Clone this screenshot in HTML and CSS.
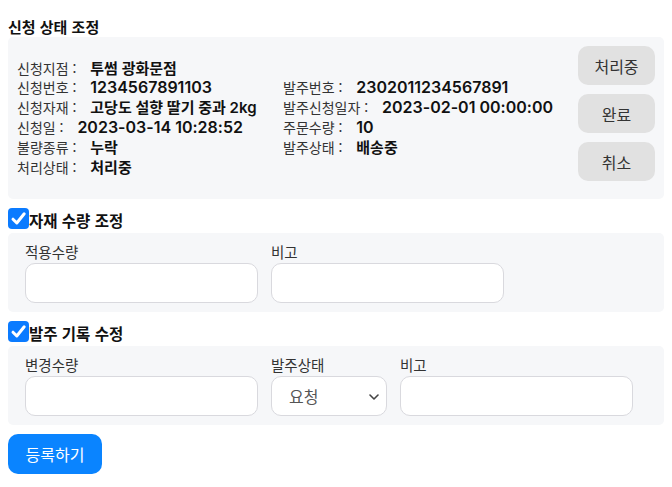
FILE: index.html
```html
<!DOCTYPE html>
<html lang="ko">
<head>
<meta charset="utf-8">
<title>신청 상태 조정</title>
<link rel="stylesheet" href="styles.css">
</head>
<body>
<h3 class="title">신청 상태 조정</h3>
<div class="panel info">
  <div class="col col1">
    <div class="row"><span class="k">신청지점 :</span> <b class="v">투썸 광화문점</b></div>
    <div class="row"><span class="k">신청번호 :</span> <b class="v num">1234567891103</b></div>
    <div class="row"><span class="k">신청자재 :</span> <b class="v">고당도 설향 딸기 중과 2kg</b></div>
    <div class="row"><span class="k">신청일 :</span> <b class="v num">2023-03-14 10:28:52</b></div>
    <div class="row"><span class="k">불량종류 :</span> <b class="v">누락</b></div>
    <div class="row"><span class="k">처리상태 :</span> <b class="v">처리중</b></div>
  </div>
  <div class="col col2">
    <div class="row"><span class="k">발주번호 :</span> <b class="v num">2302011234567891</b></div>
    <div class="row"><span class="k">발주신청일자 :</span> <b class="v num">2023-02-01 00:00:00</b></div>
    <div class="row"><span class="k">주문수량 :</span> <b class="v num">10</b></div>
    <div class="row"><span class="k">발주상태 :</span> <b class="v">배송중</b></div>
  </div>
  <div class="actions">
    <button class="btn-gray">처리중</button>
    <button class="btn-gray">완료</button>
    <button class="btn-gray">취소</button>
  </div>
</div>

<label class="check-row">
  <span class="cb"><svg viewBox="0 0 21 21" width="21" height="21"><rect x="0" y="0" width="21" height="21" rx="4" fill="#0b7bff"/><path d="M5 11.2 L8.8 15 L16.2 5.8" fill="none" stroke="#fff" stroke-width="3" stroke-linecap="round" stroke-linejoin="round"/></svg></span>
  <span class="check-label">자재 수량 조정</span>
</label>
<div class="panel fields">
  <div class="field">
    <span class="flabel">적용수량</span>
    <input class="inp" type="text">
  </div>
  <div class="field">
    <span class="flabel">비고</span>
    <input class="inp" type="text">
  </div>
</div>

<label class="check-row">
  <span class="cb"><svg viewBox="0 0 21 21" width="21" height="21"><rect x="0" y="0" width="21" height="21" rx="4" fill="#0b7bff"/><path d="M5 11.2 L8.8 15 L16.2 5.8" fill="none" stroke="#fff" stroke-width="3" stroke-linecap="round" stroke-linejoin="round"/></svg></span>
  <span class="check-label">발주 기록 수정</span>
</label>
<div class="panel fields">
  <div class="field">
    <span class="flabel">변경수량</span>
    <input class="inp" type="text">
  </div>
  <div class="field">
    <span class="flabel">발주상태</span>
    <div class="sel-wrap">
      <select class="sel"><option>요청</option></select>
      <svg class="chev" viewBox="0 0 10 6" width="10" height="6"><path d="M1 1 L5 5 L9 1" fill="none" stroke="#444" stroke-width="1.6" stroke-linecap="round" stroke-linejoin="round"/></svg>
    </div>
  </div>
  <div class="field">
    <span class="flabel">비고</span>
    <input class="inp" type="text">
  </div>
</div>

<button class="btn-primary">등록하기</button>
</body>
</html>
```

FILE: styles.css
```css
* { box-sizing: border-box; }
body {
  margin: 8px;
  font-family: "Noto Sans CJK KR", "Noto Sans", sans-serif;
  color: #111;
  background: #fff;
}
.title {
  margin: 9px 0 0 0;
  font-size: 15px;
  font-weight: 700;
  line-height: 20px;
  color: #111;
}
.panel {
  background: #f6f7f9;
  border-radius: 5px;
}
.info {
  display: flex;
  align-items: center;
  padding: 9px;
}
.col { font-size: 14px; line-height: 19.8px; }
.col1 { width: 266px; flex: none; }
.col2 { flex: 1; }
.row { white-space: nowrap; }
.k { color: #333; font-weight: 400; }
.v {
  font-family: "Inter", "Noto Sans CJK KR", sans-serif;
  font-size: 15px;
  color: #111;
  font-weight: 600;
  margin-left: 10px;
}
.num { font-size: 16px; font-weight: 600; }
.actions {
  display: flex;
  flex-direction: column;
  align-self: flex-start;
}
.btn-gray {
  width: 77px;
  height: 39px;
  margin-bottom: 9px;
  border: none;
  border-radius: 10px;
  background: #e1e1e1;
  color: #333;
  font-family: inherit;
  font-size: 16px;
  padding: 0;
}
.check-row {
  display: flex;
  align-items: center;
  margin: 8px 0 4px 0;
  height: 22px;
}
.cb { width: 21px; height: 21px; display: block; flex: none; }
.cb svg { display: block; }
.check-label {
  font-size: 15.5px;
  font-weight: 700;
  line-height: 22px;
  padding-top: 3px;
}
.fields {
  display: flex;
  gap: 13px;
  padding: 9px 9px 9px 17px;
}
.field {
  display: flex;
  flex-direction: column;
}
.flabel {
  font-size: 14.5px;
  line-height: 20px;
  color: #333;
  margin-bottom: 1px;
}
.inp {
  width: 233px;
  height: 40px;
  border: 1px solid #d9d9de;
  border-radius: 10px;
  background: #fff;
  font-family: inherit;
  font-size: 15px;
  padding: 0 12px;
}
.sel-wrap { position: relative; width: 116px; height: 40px; }
.sel {
  appearance: none;
  -webkit-appearance: none;
  width: 116px;
  height: 40px;
  border: 1px solid #d9d9de;
  border-radius: 10px;
  background: #fff;
  font-family: inherit;
  font-size: 16px;
  color: #555;
  padding: 0 0 0 17px;
}
.chev {
  position: absolute;
  right: 8px;
  top: 18px;
}
.btn-primary {
  margin-top: 9px;
  width: 94px;
  height: 40px;
  border: none;
  border-radius: 10px;
  background: #0a84ff;
  color: #fff;
  font-family: inherit;
  font-size: 16px;
  padding: 0;
  display: block;
}
```
